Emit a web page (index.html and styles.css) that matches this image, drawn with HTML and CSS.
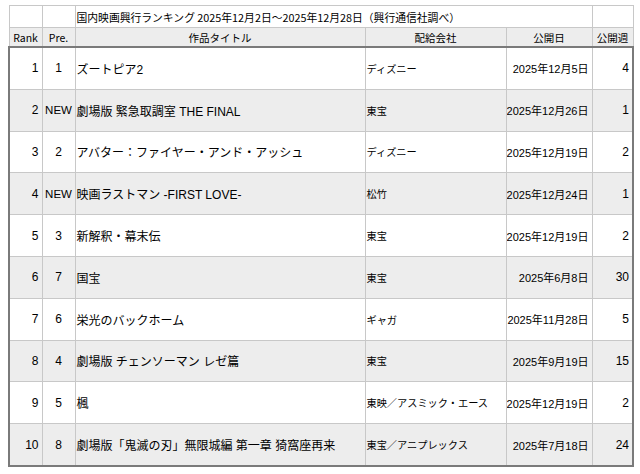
FILE: index.html
```html
<!DOCTYPE html>
<html lang="ja">
<head>
<meta charset="utf-8">
<title>国内映画興行ランキング</title>
<link rel="stylesheet" href="styles.css">
</head>
<body>
<table class="ranking">
  <colgroup>
    <col class="c-rank"><col class="c-pre"><col class="c-title"><col class="c-dist"><col class="c-date"><col class="c-weeks">
  </colgroup>
  <thead>
    <tr class="caption-row">
      <td></td><td></td>
      <td colspan="3" class="caption">国内映画興行ランキング 2025年12月2日〜2025年12月28日（興行通信社調べ）</td>
      <td></td>
    </tr>
    <tr class="head-row">
      <th>Rank</th><th>Pre.</th><th>作品タイトル</th><th>配給会社</th><th>公開日</th><th>公開週</th>
    </tr>
  </thead>
  <tbody>
    <tr><td class="num">1</td><td class="pre">1</td><td class="title">ズートピア2</td><td class="dist">ディズニー</td><td class="date">2025年12月5日</td><td class="num">4</td></tr>
    <tr class="alt"><td class="num">2</td><td class="pre new">NEW</td><td class="title">劇場版 緊急取調室 THE FINAL</td><td class="dist">東宝</td><td class="date">2025年12月26日</td><td class="num">1</td></tr>
    <tr><td class="num">3</td><td class="pre">2</td><td class="title">アバター：ファイヤー・アンド・アッシュ</td><td class="dist">ディズニー</td><td class="date">2025年12月19日</td><td class="num">2</td></tr>
    <tr class="alt"><td class="num">4</td><td class="pre new">NEW</td><td class="title">映画ラストマン -FIRST LOVE-</td><td class="dist">松竹</td><td class="date">2025年12月24日</td><td class="num">1</td></tr>
    <tr><td class="num">5</td><td class="pre">3</td><td class="title">新解釈・幕末伝</td><td class="dist">東宝</td><td class="date">2025年12月19日</td><td class="num">2</td></tr>
    <tr class="alt"><td class="num">6</td><td class="pre">7</td><td class="title">国宝</td><td class="dist">東宝</td><td class="date">2025年6月8日</td><td class="num">30</td></tr>
    <tr><td class="num">7</td><td class="pre">6</td><td class="title">栄光のバックホーム</td><td class="dist">ギャガ</td><td class="date">2025年11月28日</td><td class="num">5</td></tr>
    <tr class="alt"><td class="num">8</td><td class="pre">4</td><td class="title">劇場版 チェンソーマン レゼ篇</td><td class="dist">東宝</td><td class="date">2025年9月19日</td><td class="num">15</td></tr>
    <tr><td class="num">9</td><td class="pre">5</td><td class="title">楓</td><td class="dist">東映／アスミック・エース</td><td class="date">2025年12月19日</td><td class="num">2</td></tr>
    <tr class="alt"><td class="num">10</td><td class="pre">8</td><td class="title">劇場版「鬼滅の刃」無限城編 第一章 猗窩座再来</td><td class="dist">東宝／アニプレックス</td><td class="date">2025年7月18日</td><td class="num">24</td></tr>
  </tbody>
</table>
</body>
</html>
```

FILE: styles.css
```css
html, body {
  background: #ffffff;
}
body {
  margin: 5px 0 0 8px;
  font-family: "Liberation Sans", "Noto Sans CJK JP", sans-serif;
  color: #000;
}
.ranking {
  border-collapse: collapse;
  table-layout: fixed;
  width: 624px;
}
.c-rank { width: 33px; }
.c-pre { width: 33px; }
.c-title { width: 290px; }
.c-dist { width: 141px; }
.c-date { width: 86px; }
.c-weeks { width: 41px; }

.ranking td, .ranking th {
  border: 1px solid #c8c8c8;
  padding: 0;
  white-space: nowrap;
  overflow: hidden;
}
.caption-row td {
  height: 21px;
  background: #fff;
}
.caption {
  font-size: 10.8px;
  padding-left: 1px !important;
  text-align: left;
  font-family: "Noto Sans CJK JP", sans-serif;
}
.head-row th {
  height: 18px;
  background: #ededed;
  font-weight: normal;
  font-size: 10.5px;
  text-align: center;
  font-family: "Noto Sans CJK JP", sans-serif;
}
.ranking tbody {
  border: 2px solid #7a7a7a;
}
.ranking tbody td {
  height: 40.8px;
  background: #fff;
}
.ranking tbody tr.alt td {
  background: #ededed;
}
.num {
  text-align: right;
  padding-right: 3px !important;
  font-size: 12px;
}
.pre {
  text-align: center;
  font-size: 12px;
}
.pre.new {
  font-size: 11.5px;
}
.title {
  font-size: 12px;
  padding-left: 1px !important;
}
.dist {
  font-size: 10.2px;
  padding-left: 1px !important;
}
.date {
  font-size: 11px;
  text-align: right;
  padding-right: 3px !important;
}
```
